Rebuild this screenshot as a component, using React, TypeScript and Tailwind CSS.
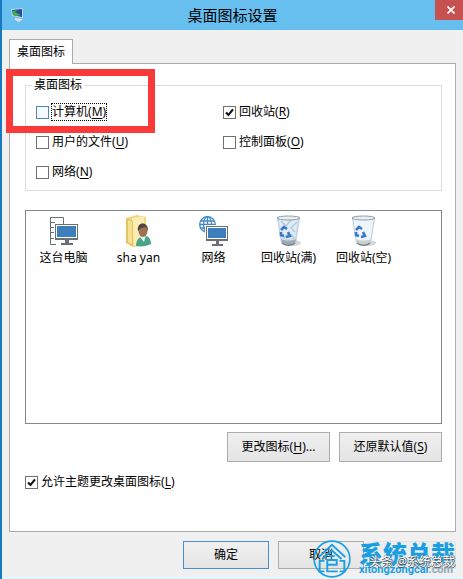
import { useState } from "react";
import type { ReactNode } from "react";

function Key({ children }: { children: string }) {
  return (
    <>
      (<span className="underline underline-offset-2">{children}</span>)
    </>
  );
}

function CheckBox({
  id,
  label,
  hotkey,
  initial = false,
  focused = false,
}: {
  id: string;
  label: string;
  hotkey: string;
  initial?: boolean;
  focused?: boolean;
}) {
  const [checked, setChecked] = useState(initial);

  return (
    <div className="flex h-[18px] items-center gap-[2px]">
      <span className="grid">
        <input
          id={id}
          type="checkbox"
          checked={checked}
          onChange={(e) => setChecked(e.target.checked)}
          className={`col-start-1 row-start-1 size-[13px] appearance-none border outline-none ${
            focused ? "border-[#5585b5] bg-[#f3f9ff]" : "border-[#707070] bg-white"
          }`}
        />
        {checked && (
          <svg viewBox="0 0 13 13" className="pointer-events-none col-start-1 row-start-1 size-[13px]">
            <path d="M3 6.4 5.5 9 10 3.4" fill="none" stroke="#111" strokeWidth="2.1" />
          </svg>
        )}
      </span>
      <label
        htmlFor={id}
        className={`border border-dotted leading-4 ${focused ? "border-black" : "border-transparent"}`}
      >
        {label}
        <Key>{hotkey}</Key>
      </label>
    </div>
  );
}

function ComputerIcon() {
  return (
    <svg viewBox="0 0 28 28" className="size-7">
      <g fill="none" stroke="#6b7075">
        <path d="M6 27.500H.5V.5h13V7" />
        <path d="M1 5.500h4M1 10.500h3M1 15.500h3M1 21.500h3" />
      </g>
      <path d="M5 7h23v16h-9v3h4v2H11v-2h4v-3H5z" fill="#6b7075" />
      <path d="M6 8h21v13H6z" fill="#fff" />
      <path d="M7 9h19v11H7z" fill="#3d7ebd" />
    </svg>
  );
}

function UserFolderIcon() {
  return (
    <svg viewBox="0 0 27 32" className="h-8 w-[27px]">
      <path d="m1 3 11-3 9 2v27l-12 3-8-4z" fill="#f1d67c" />
      <path d="m7 3 12-2 1 26-11 4z" fill="#faeeb4" />
      <path d="m1 3 7 3v26l-7-4z" fill="#e5c465" />
      <path d="m3 5 4 2v22l-4-2z" fill="#f6e094" />
      <path d="M11 31c0-6 3-9 7-10 6-1 8 4 8 8-4 2-9 3-15 2z" fill="#4aa287" />
      <path d="m15 22 4 5 2-7" fill="#e8f4ef" />
      <ellipse cx="18" cy="16" rx="4.500" ry="6" fill="#9d7151" />
      <path d="M13 16c-2-10 11-10 10 0l-2-4-5 1z" fill="#51443a" />
    </svg>
  );
}

function NetworkIcon() {
  return (
    <svg viewBox="0 0 29 30" className="h-[30px] w-[29px]">
      <g fill="none" stroke="#4388c6" strokeWidth="1.300">
        <circle cx="8.500" cy="8.500" r="7.800" />
        <ellipse cx="8.500" cy="8.500" rx="4" ry="7.800" />
        <path d="M8.500 1v15M1 8.500h15M2 5h13M2 12h13" />
      </g>
      <path d="M6 9h23v17h-9v1h4v2H12v-2h4v-1H6z" fill="#fff" />
      <path d="M7 10h22v15h-9v3h4v2H13v-2h4v-3H7z" fill="#6b7075" />
      <path d="M8 11h20v12H8z" fill="#fff" />
      <path d="M9 12h18v10H9z" fill="#3d7ebd" />
    </svg>
  );
}

function BinIcon({ full = false }: { full?: boolean }) {
  return (
    <svg viewBox="0 0 26 32" className="h-8 w-[26px]">
      <ellipse cx="17" cy="28" rx="8" ry="3" fill="#d5d8da" />
      <path d="M1.500 3h22l-4 25c-3 3-10 3-14 0z" fill={full ? "#cbdcea" : "#eff6fb"} stroke="#c0cdd7" />
      {full && (
        <>
          <path d="m3 5 6-2 4 4 5-3 4 2-3 16-6 2-8-2z" fill="#dfebf5" />
          <path d="m5 6 5 5 5-6m6 2-6 6 4 4m-4 2 3 4m-10 0 5-5" fill="none" stroke="#b2c8da" strokeWidth="1.300" />
        </>
      )}
      <path d="M5 24c4 2 11 2 15 0l-1 4c-3 3-10 3-13 0z" fill={full ? "#9eabb5" : "#cbd1d1"} />
      <path d="M6 28c3 3 10 3 13 0" fill="none" stroke="#7d8388" strokeWidth="1.400" />
      <ellipse cx="12.500" cy="3" rx="11.500" ry="2" fill="#e9f0f5" stroke="#929ca4" />
      <g fill="none" stroke="#3b76ce" strokeWidth="2.600">
        <path d="m5 15 3-3 3 2" />
        <path d="m12 17 2 4-4 1" />
        <path d="m8 21-3-1v-3" />
      </g>
    </svg>
  );
}

const ICONS: { name: string; icon: ReactNode }[] = [
  { name: "这台电脑", icon: <ComputerIcon /> },
  { name: "sha yan", icon: <UserFolderIcon /> },
  { name: "网络", icon: <NetworkIcon /> },
  { name: "回收站(满)", icon: <BinIcon full /> },
  { name: "回收站(空)", icon: <BinIcon /> },
];

const buttonClass =
  "border border-[#acacac] bg-linear-to-b from-[#f0f0f0] to-[#e4e4e4] text-center";

function Watermark() {
  return (
    <div className="pointer-events-none absolute right-2 bottom-0 flex items-end gap-2">
      <svg viewBox="0 0 40 40" className="mb-px size-[38px]">
        <g fill="none" stroke="#1b9fe3">
          <circle cx="20" cy="20" r="18.800" strokeWidth="1.700" />
          <path d="M6 18 20 5l14 13M10 20l10-9 10 9" strokeWidth="2" />
          <path d="M12 22H7v11h5M28 22h5v11h-5" strokeWidth="2" />
          <path d="M15 26h10v-5H15v12h11M17 17h6" strokeWidth="2" />
        </g>
      </svg>
      <div className="grid w-[96px] grid-cols-[96px] pb-px text-[#1b9fe3]">
        <div className="col-start-1 row-start-1 text-2xl leading-6 font-black whitespace-nowrap">系统总裁</div>
        <div className="col-start-1 row-start-2 -mt-1 font-[Roboto] text-[11px] leading-4 font-bold whitespace-nowrap">
          xitongzongcai<span className="text-[#8faab9]">.com</span>
        </div>
        <div className="relative col-start-1 row-span-2 row-start-1 mt-3 justify-self-end text-xs leading-4 whitespace-nowrap text-white [text-shadow:1px_0_#555,0_1px_#555]">
          头条 @系统总裁
        </div>
      </div>
    </div>
  );
}

export default function App() {
  return (
    <div className="relative flex min-h-screen flex-col border-l-2 border-[#1979be] bg-[#f0f0f0] font-['Noto_Sans','Noto_Sans_CJK_SC',sans-serif] text-xs text-black">
      <header className="grid h-[30px] grid-cols-[60px_1fr_60px] items-center bg-[#67bfef]">
        <svg viewBox="0 0 16 16" className="ml-2 size-4">
          <path d="m1 2 12-1v10L2 9z" fill="#bdd9e7" />
          <path d="m2 3 10-1v8L3 8z" fill="#244c9e" />
          <path d="m2 4 6-1-3 2 6 3-5 1-3-1z" fill="#43a957" />
          <path d="m5 11 8 1-4 3-4-2z" fill="#e2dde0" />
        </svg>
        <h1 className="text-center text-[15px] leading-5">桌面图标设置</h1>
        <button
          type="button"
          aria-label="关闭"
          className="flex h-5 w-7 items-center justify-center self-start justify-self-end bg-[#c75050] pl-1"
        >
          <svg viewBox="0 0 8 8" className="size-2">
            <path d="m.5.5 7 7M7.500.5l-7 7" stroke="#fff" strokeWidth="1.700" />
          </svg>
        </button>
      </header>

      <main className="flex flex-1 flex-col px-[7px] pt-[9px]">
        <div role="tablist" className="flex">
          <button
            type="button"
            role="tab"
            aria-selected="true"
            className="relative z-10 -mb-px h-[25px] border border-b-0 border-[#acacac] bg-white px-[7px] leading-4"
          >
            桌面图标
          </button>
        </div>

        <section className="border border-[#acacac] bg-white pt-3 pr-[13px] pb-10 pl-[15px]">
          <fieldset className="h-[115px] border border-[#dcdcdc] px-[10px]">
            <legend className="-ml-1 px-[2px] leading-[18px]">桌面图标</legend>
            <div className="grid grid-cols-[187px_1fr] gap-y-3 pt-[9px]">
              <CheckBox id="computer" label="计算机" hotkey="M" focused />
              <CheckBox id="bin" label="回收站" hotkey="R" initial />
              <CheckBox id="files" label="用户的文件" hotkey="U" />
              <CheckBox id="panel" label="控制面板" hotkey="O" />
              <CheckBox id="network" label="网络" hotkey="N" />
            </div>
          </fieldset>

          <ul className="mt-[19px] flex h-[214px] border border-[#828790] pt-1">
            {ICONS.map(({ name, icon }) => (
              <li key={name} className="flex w-[75px] flex-col items-center">
                <span className="flex h-8 items-center">{icon}</span>
                <span className="mt-[3px] leading-4">{name}</span>
              </li>
            ))}
          </ul>

          <div className="mt-2 flex justify-end gap-[9px]">
            <button type="button" className={`${buttonClass} h-[30px] w-[103px]`}>
              更改图标<Key>H</Key>...
            </button>
            <button type="button" className={`${buttonClass} h-[30px] w-[103px]`}>
              还原默认值<Key>S</Key>
            </button>
          </div>

          <div className="mt-[11px]">
            <CheckBox id="themes" label="允许主题更改桌面图标" hotkey="L" initial />
          </div>
        </section>

        <footer className="mt-[9px] flex justify-end gap-[9px]">
          <button
            type="button"
            className="h-7 w-[86px] border border-[#4293d6] bg-linear-to-b from-[#f0f0f0] to-[#e4e4e4]"
          >
            确定
          </button>
          <button type="button" className={`${buttonClass} h-7 w-[86px]`}>
            取消
          </button>
          <button type="button" aria-label="应用" className="h-7 w-[83px] border border-[#e2e2e2] bg-[#ededed]" />
        </footer>
      </main>

      <div className="h-[3px] bg-[#e5f5fc]" />
      <div className="pointer-events-none absolute inset-x-0 top-[69px] pl-1">
        <div className="h-16 w-[149px] border-[7px] border-[#fa3939]" />
      </div>
      <Watermark />
    </div>
  );
}
